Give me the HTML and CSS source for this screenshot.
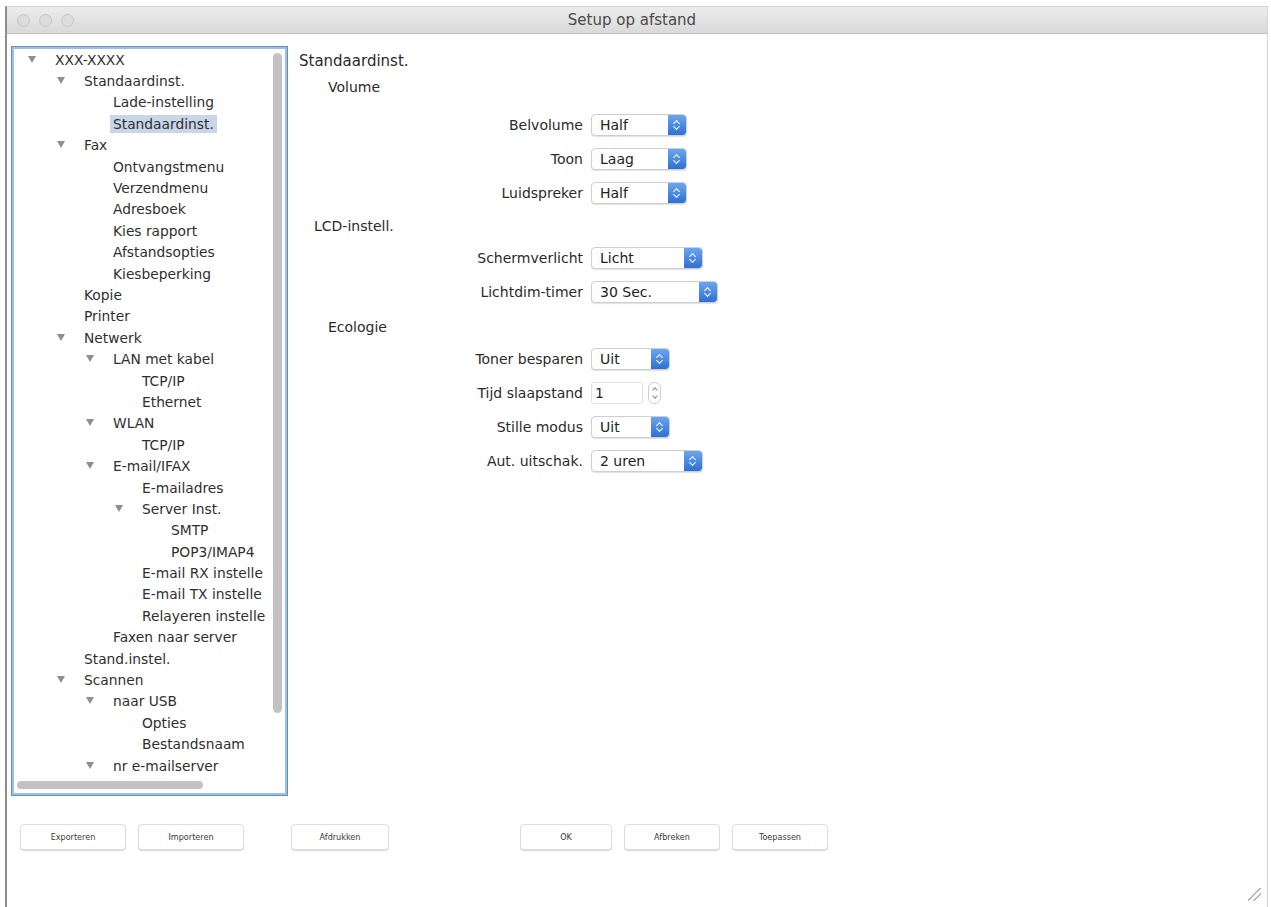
FILE: index.html
```html
<!DOCTYPE html>
<html lang="nl">
<head>
<meta charset="utf-8">
<title>Setup op afstand</title>
<link rel="stylesheet" href="styles.css">
</head>
<body>
<div class="window">
  <div class="titlebar">
    <div class="lights"><span class="light"></span><span class="light"></span><span class="light"></span></div>
    <div class="title">Setup op afstand</div>
  </div>
  <div class="main">
    <div class="tree-panel">
      <div class="tree-scroll">
        <ul class="tree">
          <li class="row l0"><span class="tri"></span><span class="txt">XXX-XXXX</span></li>
          <li class="row l1"><span class="tri"></span><span class="txt">Standaardinst.</span></li>
          <li class="row l2"><span class="sp"></span><span class="txt">Lade-instelling</span></li>
          <li class="row l2"><span class="sp"></span><span class="txt sel">Standaardinst.</span></li>
          <li class="row l1"><span class="tri"></span><span class="txt">Fax</span></li>
          <li class="row l2"><span class="sp"></span><span class="txt">Ontvangstmenu</span></li>
          <li class="row l2"><span class="sp"></span><span class="txt">Verzendmenu</span></li>
          <li class="row l2"><span class="sp"></span><span class="txt">Adresboek</span></li>
          <li class="row l2"><span class="sp"></span><span class="txt">Kies rapport</span></li>
          <li class="row l2"><span class="sp"></span><span class="txt">Afstandsopties</span></li>
          <li class="row l2"><span class="sp"></span><span class="txt">Kiesbeperking</span></li>
          <li class="row l1"><span class="sp"></span><span class="txt">Kopie</span></li>
          <li class="row l1"><span class="sp"></span><span class="txt">Printer</span></li>
          <li class="row l1"><span class="tri"></span><span class="txt">Netwerk</span></li>
          <li class="row l2"><span class="tri"></span><span class="txt">LAN met kabel</span></li>
          <li class="row l3"><span class="sp"></span><span class="txt">TCP/IP</span></li>
          <li class="row l3"><span class="sp"></span><span class="txt">Ethernet</span></li>
          <li class="row l2"><span class="tri"></span><span class="txt">WLAN</span></li>
          <li class="row l3"><span class="sp"></span><span class="txt">TCP/IP</span></li>
          <li class="row l2"><span class="tri"></span><span class="txt">E-mail/IFAX</span></li>
          <li class="row l3"><span class="sp"></span><span class="txt">E-mailadres</span></li>
          <li class="row l3"><span class="tri"></span><span class="txt">Server Inst.</span></li>
          <li class="row l4"><span class="sp"></span><span class="txt">SMTP</span></li>
          <li class="row l4"><span class="sp"></span><span class="txt">POP3/IMAP4</span></li>
          <li class="row l3"><span class="sp"></span><span class="txt">E-mail RX instelle</span></li>
          <li class="row l3"><span class="sp"></span><span class="txt">E-mail TX instelle</span></li>
          <li class="row l3"><span class="sp"></span><span class="txt">Relayeren instelle</span></li>
          <li class="row l2"><span class="sp"></span><span class="txt">Faxen naar server</span></li>
          <li class="row l1"><span class="sp"></span><span class="txt">Stand.instel.</span></li>
          <li class="row l1"><span class="tri"></span><span class="txt">Scannen</span></li>
          <li class="row l2"><span class="tri"></span><span class="txt">naar USB</span></li>
          <li class="row l3"><span class="sp"></span><span class="txt">Opties</span></li>
          <li class="row l3"><span class="sp"></span><span class="txt">Bestandsnaam</span></li>
          <li class="row l2"><span class="tri"></span><span class="txt">nr e-mailserver</span></li>
        </ul>
        <div class="vscroll"><div class="vthumb"></div></div>
      </div>
      <div class="hscroll"><div class="hthumb"></div></div>
    </div>

    <div class="settings">
      <h1 class="pane-title">Standaardinst.</h1>

      <h2 class="section">Volume</h2>
      <div class="form form-first">
        <label class="lbl">Belvolume</label>
        <div class="popup w96"><span class="val">Half</span><span class="arrows"></span></div>
        <label class="lbl">Toon</label>
        <div class="popup w96"><span class="val">Laag</span><span class="arrows"></span></div>
        <label class="lbl">Luidspreker</label>
        <div class="popup w96"><span class="val">Half</span><span class="arrows"></span></div>
      </div>

      <h2 class="section lcd">LCD-instell.</h2>
      <div class="form">
        <label class="lbl">Schermverlicht</label>
        <div class="popup w112"><span class="val">Licht</span><span class="arrows"></span></div>
        <label class="lbl">Lichtdim-timer</label>
        <div class="popup w127"><span class="val">30 Sec.</span><span class="arrows"></span></div>
      </div>

      <h2 class="section">Ecologie</h2>
      <div class="form">
        <label class="lbl">Toner besparen</label>
        <div class="popup w79"><span class="val">Uit</span><span class="arrows"></span></div>
        <label class="lbl">Tijd slaapstand</label>
        <div class="numfield"><span class="numval">1</span><span class="stepper"><span class="up"></span><span class="down"></span></span></div>
        <label class="lbl">Stille modus</label>
        <div class="popup w79"><span class="val">Uit</span><span class="arrows"></span></div>
        <label class="lbl">Aut. uitschak.</label>
        <div class="popup w112"><span class="val">2 uren</span><span class="arrows"></span></div>
      </div>
    </div>
  </div>

  <div class="buttons">
    <button class="btn b-exp">Exporteren</button>
    <button class="btn b-imp">Importeren</button>
    <button class="btn b-afd">Afdrukken</button>
    <button class="btn b-ok">OK</button>
    <button class="btn b-afb">Afbreken</button>
    <button class="btn b-toe">Toepassen</button>
  </div>
  <div class="grip"></div>
</div>
</body>
</html>
```

FILE: styles.css
```css
* { box-sizing: border-box; }
html, body { margin: 0; padding: 0; background: #ffffff; }
body {
  width: 1271px;
  height: 907px;
  overflow: hidden;
  font-family: "DejaVu Sans", "Liberation Sans", sans-serif;
  color: #2b2b2b;
}

.window {
  margin: 6px 3px 0 5px;
  height: 901px;
  border-left: 2px solid #8d8d8d;
  border-top: 1px solid #d2d2d2;
  border-right: 1px solid #d6d6d6;
  background: #ffffff;
  position: relative;
}

.titlebar {
  height: 27px;
  background: linear-gradient(#ececec, #d9d9d9);
  border-bottom: 1px solid #c4c4c4;
  display: flex;
  align-items: center;
  position: relative;
}
.lights { display: flex; gap: 9px; padding-left: 10px; }
.light {
  width: 13px; height: 13px; border-radius: 50%;
  background: #dcdcdc;
  border: 1px solid #c6c6c6;
}
.title {
  position: absolute; left: 0; right: 0; top: 0; bottom: 0;
  display: flex; align-items: center; justify-content: center;
  font-size: 15px; color: #4a4a4a;
  padding-right: 10px;
}

.main {
  display: flex;
  padding: 12px 0 0 4px;
  gap: 11px;
}

.tree-panel {
  width: 277px;
  height: 750px;
  border: 1px solid #5d8fcb;
  box-shadow: inset 0 0 0 2px #9fc0e6;
  padding: 2px;
  display: flex;
  flex-direction: column;
  background: #fff;
}
.tree-scroll {
  flex: 1;
  display: flex;
  overflow: hidden;
}
.tree {
  list-style: none;
  margin: 0;
  padding: 0;
  width: 254px;
  overflow: hidden;
  flex: none;
}
.row {
  height: 21.4px;
  display: flex;
  align-items: center;
  white-space: nowrap;
  font-size: 13.8px;
  color: #2f2f2f;
}
.l0 { padding-left: 14px; }
.l1 { padding-left: 43px; }
.l2 { padding-left: 72px; }
.l3 { padding-left: 101px; }
.l4 { padding-left: 130px; }
.tri, .sp { width: 27px; flex: none; height: 10px; position: relative; }
.tri::before {
  content: "";
  position: absolute; left: 0; top: 1px;
  border-left: 4.5px solid transparent;
  border-right: 4.5px solid transparent;
  border-top: 7px solid #8e8e8e;
}
.sel {
  background: #c9d6ea;
  padding: 1px 3px;
  margin-left: -3px;
}
.vscroll {
  width: 15px;
  flex: none;
  padding: 4px 3px 64px 3px;
  margin-left: 2px;
}
.vthumb {
  height: 100%;
  background: #c2c2c2;
  border-radius: 5px;
}
.hscroll {
  height: 16px;
  padding: 4px 0 4px 3px;
}
.hthumb {
  width: 186px;
  height: 100%;
  background: #c2c2c2;
  border-radius: 5px;
}

.settings {
  flex: 1;
  padding-top: 4px;
}
.pane-title {
  font-size: 15px;
  font-weight: normal;
  margin: 0;
  height: 22px;
  line-height: 22px;
  color: #2a2a2a;
}
.section {
  font-size: 14px;
  font-weight: normal;
  margin: 0;
  height: 30px;
  line-height: 30px;
  padding-left: 29px;
  color: #2a2a2a;
}
.section.lcd { padding-left: 15px; }
.form {
  display: grid;
  grid-template-columns: 284px auto;
  grid-auto-rows: 34px;
  column-gap: 8px;
  align-items: center;
  justify-items: start;
  margin-bottom: 3px;
}
.form-first { margin-top: 6px; margin-bottom: 1px; }
.lbl {
  justify-self: end;
  font-size: 14px;
  color: #2a2a2a;
}
.popup {
  height: 22px;
  border: 1px solid #cfcfcf;
  border-radius: 4px;
  box-shadow: 0 1px 1px rgba(0,0,0,0.12);
  display: flex;
  align-items: stretch;
  background: #fff;
  overflow: hidden;
}
.w79 { width: 79px; }
.w96 { width: 96px; }
.w112 { width: 112px; }
.w127 { width: 127px; }
.val {
  flex: 1;
  font-size: 14px;
  padding-left: 8px;
  line-height: 20px;
  color: #222;
}
.arrows {
  width: 18px;
  flex: none;
  background: linear-gradient(#6aa6ef, #2f6fd6);
  position: relative;
  border-radius: 0 3px 3px 0;
}
.arrows::before, .arrows::after {
  content: "";
  position: absolute;
  left: 6px;
  width: 4px; height: 4px;
  border-left: 1.5px solid #fff;
  border-top: 1.5px solid #fff;
}
.arrows::before { top: 6px; transform: rotate(45deg); }
.arrows::after { top: 9px; transform: rotate(225deg); }

.numfield {
  display: flex;
  align-items: center;
  gap: 5px;
}
.numval {
  width: 52px;
  height: 22px;
  border: 1px solid #e2e2e2;
  border-radius: 3px;
  font-size: 14px;
  line-height: 20px;
  padding-left: 3px;
}
.stepper {
  width: 13px;
  height: 22px;
  border: 1px solid #cfcfcf;
  border-radius: 6px;
  position: relative;
}
.stepper .up, .stepper .down {
  position: absolute;
  left: 3.5px;
  width: 4px; height: 4px;
  border-left: 1px solid #8a8a8a;
  border-top: 1px solid #8a8a8a;
}
.stepper .up { top: 5px; transform: rotate(45deg); }
.stepper .down { top: 11px; transform: rotate(225deg); }

.buttons {
  display: flex;
  align-items: center;
  padding: 28px 0 0 13px;
}
.btn {
  height: 26px;
  background: #fff;
  border: 1px solid #dedede;
  border-radius: 4px;
  box-shadow: 0 1px 1px rgba(0,0,0,0.15);
  font-family: "DejaVu Sans Condensed", "DejaVu Sans", sans-serif;
  font-size: 9px;
  color: #3a3a3a;
  padding: 0;
}
.b-exp { width: 106px; }
.b-imp { width: 106px; margin-left: 12px; }
.b-afd { width: 98px; margin-left: 47px; }
.b-ok { width: 92px; margin-left: 131px; }
.b-afb { width: 96px; margin-left: 12px; }
.b-toe { width: 96px; margin-left: 12px; }

.grip {
  position: absolute;
  right: 6px;
  bottom: 6px;
  width: 13px;
  height: 13px;
  background: linear-gradient(135deg, transparent 45%, #b5b5b5 45%, #b5b5b5 52%, transparent 52%, transparent 68%, #b5b5b5 68%, #b5b5b5 75%, transparent 75%);
}
```
